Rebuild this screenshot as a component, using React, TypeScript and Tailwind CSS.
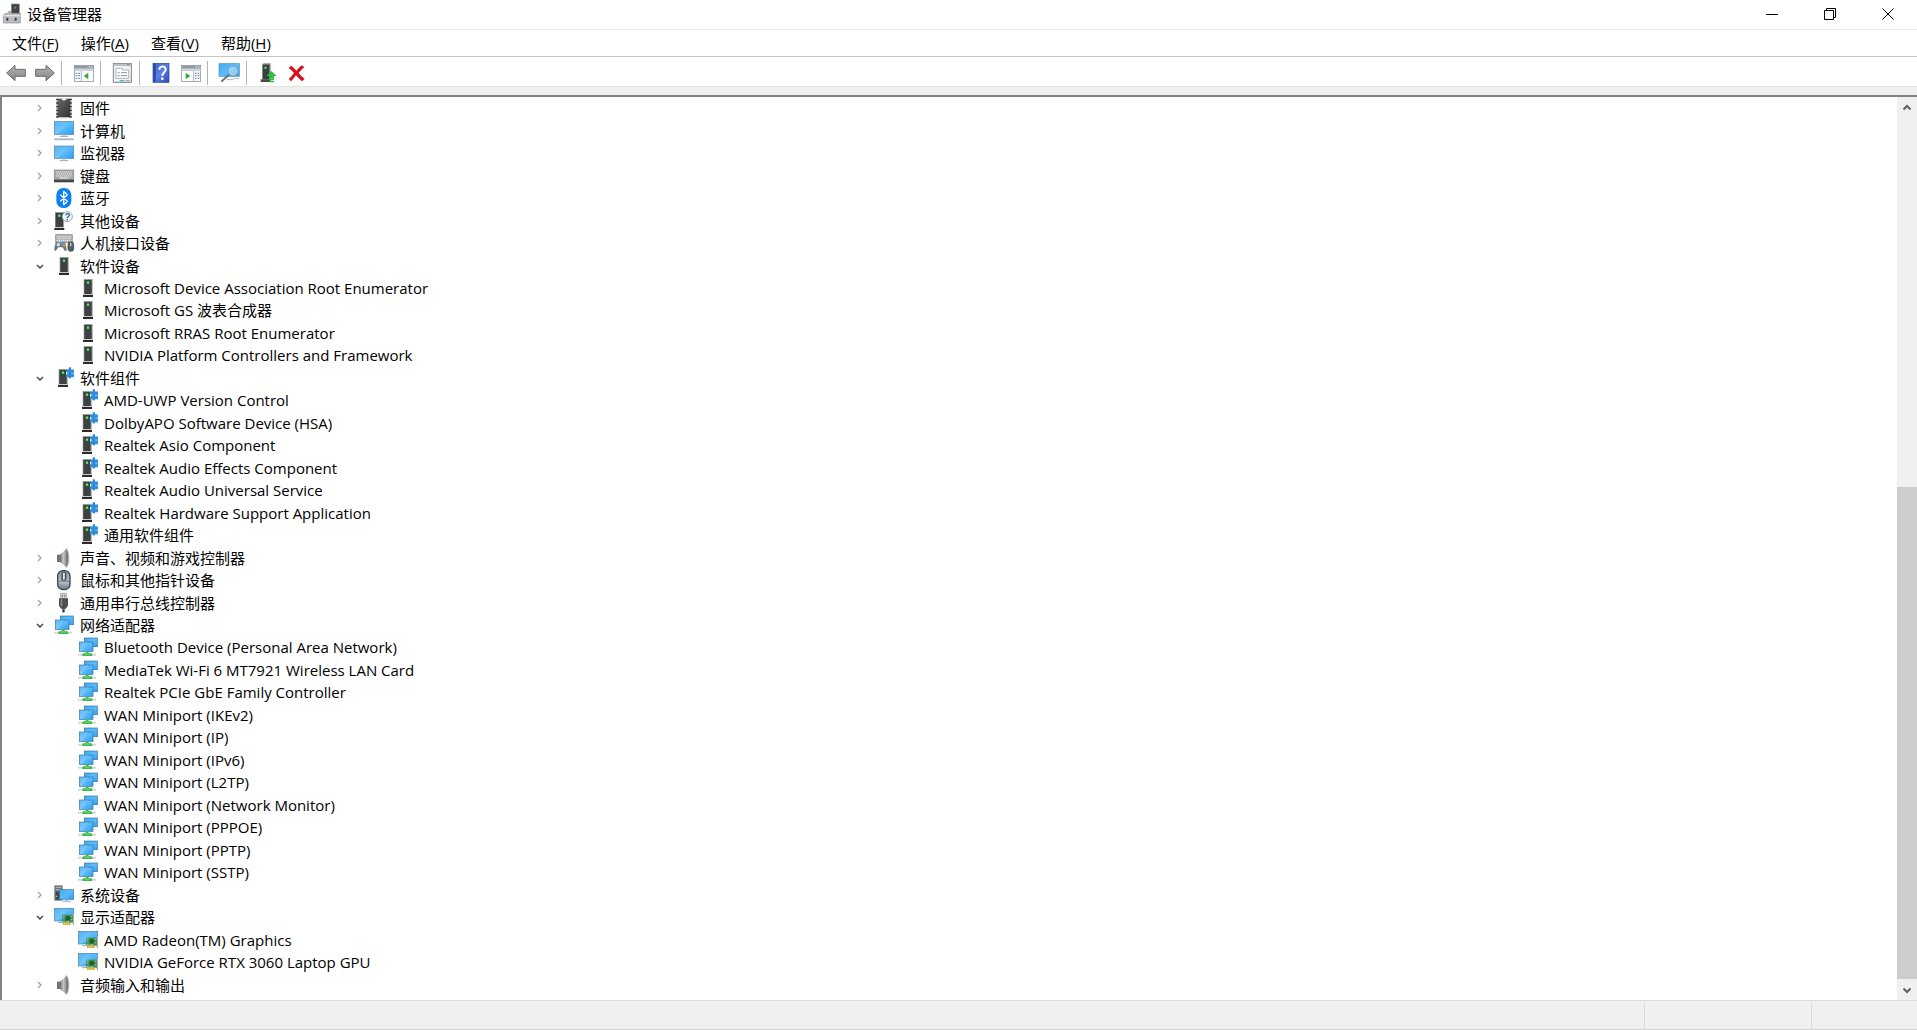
import { useState, type ReactNode } from "react";

type IconName =
  | "chip" | "computer" | "monitor" | "keyboard" | "bluetooth" | "unknown" | "hid"
  | "device" | "component" | "speaker" | "mouse" | "usb" | "network" | "system" | "display";

function Svg({ children }: { children: ReactNode }) {
  return (
    <svg viewBox="0 0 60 60" className="size-5 shrink-0 overflow-visible" aria-hidden="true">
      {children}
    </svg>
  );
}

function Defs() {
  return (
    <svg className="absolute size-0" aria-hidden="true">
      <defs>
        <linearGradient id="screen" x1="0" y1="0" x2="1" y2="1">
          <stop offset="0" stopColor="#3fa9f0" />
          <stop offset="0.5" stopColor="#5cbcfb" />
          <stop offset="1" stopColor="#2f9cf0" />
        </linearGradient>
        <linearGradient id="metal" x1="0" y1="0" x2="1" y2="0">
          <stop offset="0" stopColor="#6d7073" />
          <stop offset="0.5" stopColor="#c4c6c8" />
          <stop offset="1" stopColor="#77797c" />
        </linearGradient>
        <linearGradient id="arrow" x1="0" y1="0" x2="0" y2="1">
          <stop offset="0" stopColor="#b4b4b4" />
          <stop offset="1" stopColor="#858585" />
        </linearGradient>
        <linearGradient id="help" x1="0" y1="0" x2="1" y2="1">
          <stop offset="0" stopColor="#3f62cf" />
          <stop offset="0.5" stopColor="#5b7fe6" />
          <stop offset="1" stopColor="#2a49b0" />
        </linearGradient>
        <linearGradient id="chipBody" x1="0" y1="0" x2="1" y2="1">
          <stop offset="0" stopColor="#666" />
          <stop offset="1" stopColor="#333" />
        </linearGradient>
        <linearGradient id="mouseBody" x1="0" y1="0" x2="0" y2="1">
          <stop offset="0" stopColor="#8fa0ae" />
          <stop offset="0.6" stopColor="#b4bfc9" />
          <stop offset="1" stopColor="#667482" />
        </linearGradient>
      </defs>
    </svg>
  );
}

function Tower({ x = 0 }: { x?: number }) {
  return (
    <g transform={`translate(${x} 0)`}>
      <rect x="17" y="3" width="27" height="47" fill="#9b9d9d" />
      <rect x="19" y="6" width="22" height="42" fill="#3d4141" />
      <rect x="17" y="48" width="27" height="3" fill="#c9c9c9" />
      <rect x="15" y="51" width="30" height="6" fill="#2b2b2b" />
      <rect x="26" y="10" width="8" height="8" fill="#2c8f3a" />
      <rect x="27" y="11" width="6" height="6" fill="#5af060" />
    </g>
  );
}

function DeviceIcon({ name }: { name: IconName }) {
  switch (name) {
    case "chip":
      return (
        <Svg>
          <path d="M7 2h46v56H7z" fill="#a8a8a8" />
          <path d="M12 2h12c1 7 11 7 12 0h12v56H12z" fill="url(#chipBody)" />
          <path d="M7 4h6M7 15h6M7 26h6M7 37h6M7 48h6M7 57h6M47 4h6M47 15h6M47 26h6M47 37h6M47 48h6M47 57h6" stroke="#2a2a2a" strokeWidth="4" />
          <path d="M22 1c1 9 15 9 16 0z" fill="#e9e9e9" />
        </Svg>
      );
    case "computer":
      return (
        <Svg>
          <rect x="1" y="2" width="58" height="38" fill="url(#screen)" stroke="#4f7f9f" strokeWidth="2" />
          <path d="M2 3h40L14 39H2z" fill="#fff" opacity="0.13" />
          <path d="M26 41h8v5h-8z" fill="#a7d6f0" />
          <path d="M17 46h26" stroke="#9aa9b3" strokeWidth="3" />
          <path d="M1 55h58" stroke="#8eaec2" strokeWidth="5" />
          <path d="M3 54h54" stroke="#c3d5e0" strokeWidth="2" />
        </Svg>
      );
    case "monitor":
      return (
        <Svg>
          <rect x="1" y="9" width="58" height="37" fill="url(#screen)" stroke="#4f7f9f" strokeWidth="2" />
          <path d="M2 10h40L14 45H2z" fill="#fff" opacity="0.13" />
          <path d="M26 47h8v5h-8z" fill="#a7d6f0" />
          <path d="M17 53h26" stroke="#9aa9b3" strokeWidth="3" />
        </Svg>
      );
    case "keyboard":
      return (
        <Svg>
          <rect x="1" y="12" width="58" height="29" fill="#a3a6a9" stroke="#85888b" strokeWidth="2" />
          <path d="M5 18h50M8 24h46M5 30h50" stroke="#f0f0f0" strokeWidth="3" strokeDasharray="4 2" />
          <path d="M16 36h28" stroke="#f0f0f0" strokeWidth="3" />
          <rect x="0" y="41" width="60" height="8" fill="#45484b" />
        </Svg>
      );
    case "bluetooth":
      return (
        <Svg>
          <rect x="7" y="0" width="45" height="60" rx="21" fill="#0a82f5" />
          <path d="M19 20l21 20-11 10V10l11 10-21 20" fill="none" stroke="#fff" strokeWidth="4" strokeLinejoin="round" />
        </Svg>
      );
    case "unknown":
      return (
        <Svg>
          <Tower x={-14} />
          <circle cx="40" cy="17" r="15" fill="#f1f7fb" stroke="#9aa8b3" strokeWidth="3" />
          <path d="M35 13c0-7 11-7 11-1 0 4-6 5-6 10M40 25v4" fill="none" stroke="#2d64a4" strokeWidth="4" />
        </Svg>
      );
    case "hid":
      return (
        <Svg>
          <rect x="5" y="5" width="50" height="24" fill="#a9adb0" stroke="#85898c" strokeWidth="2" />
          <path d="M8 11h44M10 17h42M8 23h44" stroke="#f4f4f4" strokeWidth="3" strokeDasharray="4 2" />
          <path d="M1 52c0-14 3-25 9-25 4 0 5 4 9 4s6-4 10-4c6 0 8 10 9 22 0 7-6 7-9-1l-3-5H13l-4 6c-3 6-8 6-8 3z" fill="#6c7983" />
          <circle cx="13" cy="35" r="5" fill="#dfe6ea" />
          <circle cx="24" cy="31" r="5" fill="#3f9ee8" />
          <circle cx="31" cy="37" r="5" fill="#e0902f" />
          <rect x="42" y="26" width="17" height="29" rx="8" fill="#566069" stroke="#343c43" strokeWidth="2" />
          <path d="M50 29v11" stroke="#ccd4da" strokeWidth="4" />
        </Svg>
      );
    case "device":
      return (
        <Svg>
          <Tower />
        </Svg>
      );
    case "component":
      return (
        <Svg>
          <Tower x={-3} />
          <rect x="37" y="4" width="23" height="24" fill="#5fb0ea" />
          <path d="M44-2h7v33h-7z" fill="#2f86cc" />
          <path d="M36 6h24v7H36zM36 19h24v7H36z" fill="#2f8cd6" />
          <path d="M36 13h3v6h-3z" fill="#fff" />
        </Svg>
      );
    case "speaker":
      return (
        <Svg>
          <path d="M9 20h11v22H9z" fill="#6f7376" />
          <path d="M18 20L39 1v58L18 42z" fill="url(#metal)" />
          <path d="M37 2c10 8 10 48 0 56-4-10-4-46 0-56z" fill="#7c7f82" stroke="#adafb1" strokeWidth="2" />
        </Svg>
      );
    case "mouse":
      return (
        <Svg>
          <rect x="11" y="2" width="37" height="57" rx="16" fill="url(#mouseBody)" stroke="#39424a" strokeWidth="4" />
          <path d="M22 5v28M37 5v28M14 34h32" stroke="#5c6873" strokeWidth="2" />
          <rect x="25" y="6" width="9" height="25" rx="4" fill="#dfe7ed" stroke="#2d363d" strokeWidth="3" />
        </Svg>
      );
    case "usb":
      return (
        <Svg>
          <path d="M20 1h17v15H20z" fill="#d7d7d7" stroke="#8c8c8c" strokeWidth="2" />
          <path d="M24 6h3v5h-3zM31 6h3v5h-3z" fill="#666" />
          <path d="M15 16h27v20c0 7-7 9-9 13H24c-2-4-9-6-9-13z" fill="#4e4e4e" />
          <path d="M20 18h5v22h-5z" fill="#8a8a8a" />
          <path d="M25 49h7v9h-7z" fill="#333" />
        </Svg>
      );
    case "network":
      return (
        <Svg>
          <rect x="19" y="3" width="39" height="26" fill="url(#screen)" stroke="#33739e" strokeWidth="2" />
          <rect x="4" y="15" width="41" height="28" fill="url(#screen)" stroke="#33739e" strokeWidth="2" />
          <path d="M5 16h26L12 42H5z" fill="#fff" opacity="0.18" />
          <path d="M0 50h54v6H0z" fill="#d5d9d5" />
          <path d="M23 44h9v4h6l5 4v5H13v-5l5-4h5z" fill="#3fba4a" />
          <path d="M20 51h16" stroke="#7be07f" strokeWidth="3" />
        </Svg>
      );
    case "system":
      return (
        <Svg>
          <path d="M1 1h25v46H1z" fill="#6f7578" />
          <path d="M5 5h17v4H5zM5 12h17v4H5z" fill="#aab0b3" />
          <path d="M5 20h11v24H5z" fill="#40474b" />
          <rect x="6" y="32" width="4" height="4" fill="#6de06f" />
          <rect x="17" y="14" width="42" height="29" fill="url(#screen)" stroke="#3f7499" strokeWidth="2" />
          <path d="M34 44h9v4h-9z" fill="#8fc4e4" />
          <path d="M26 50h25" stroke="#a0b4c2" strokeWidth="3" />
        </Svg>
      );
    case "display":
      return (
        <Svg>
          <rect x="1" y="4" width="58" height="38" fill="url(#screen)" stroke="#4580a5" strokeWidth="2" />
          <path d="M2 5h40L14 41H2z" fill="#fff" opacity="0.13" />
          <path d="M12 47h14" stroke="#8fb0c6" strokeWidth="3" />
          <path d="M56 20h4v35h-4z" fill="#aeb5b0" />
          <rect x="25" y="23" width="32" height="24" fill="#3d8f52" />
          <rect x="35" y="28" width="13" height="12" fill="#245a38" />
          <path d="M27 27h5M27 33h4M50 28h5M50 38h5M27 43h5M37 44h8" stroke="#a3d09d" strokeWidth="3" />
          <path d="M27 47h23v7H27z" fill="#e2a52c" />
          <path d="M31 47v7M37 47v7M43 47v7" stroke="#f9dc79" strokeWidth="2" />
        </Svg>
      );
  }
}

type Row = { label: string; icon: IconName; level: 1 | 2; open?: boolean };

const group = (label: string, icon: IconName, children: string[] = []): Row[] => [
  { label, icon, level: 1, open: children.length > 0 },
  ...children.map((child): Row => ({ label: child, icon, level: 2 })),
];

const rows: Row[] = [
  ...group("固件", "chip"),
  ...group("计算机", "computer"),
  ...group("监视器", "monitor"),
  ...group("键盘", "keyboard"),
  ...group("蓝牙", "bluetooth"),
  ...group("其他设备", "unknown"),
  ...group("人机接口设备", "hid"),
  ...group("软件设备", "device", [
    "Microsoft Device Association Root Enumerator",
    "Microsoft GS 波表合成器",
    "Microsoft RRAS Root Enumerator",
    "NVIDIA Platform Controllers and Framework",
  ]),
  ...group("软件组件", "component", [
    "AMD-UWP Version Control",
    "DolbyAPO Software Device (HSA)",
    "Realtek Asio Component",
    "Realtek Audio Effects Component",
    "Realtek Audio Universal Service",
    "Realtek Hardware Support Application",
    "通用软件组件",
  ]),
  ...group("声音、视频和游戏控制器", "speaker"),
  ...group("鼠标和其他指针设备", "mouse"),
  ...group("通用串行总线控制器", "usb"),
  ...group("网络适配器", "network", [
    "Bluetooth Device (Personal Area Network)",
    "MediaTek Wi-Fi 6 MT7921 Wireless LAN Card",
    "Realtek PCIe GbE Family Controller",
    "WAN Miniport (IKEv2)",
    "WAN Miniport (IP)",
    "WAN Miniport (IPv6)",
    "WAN Miniport (L2TP)",
    "WAN Miniport (Network Monitor)",
    "WAN Miniport (PPPOE)",
    "WAN Miniport (PPTP)",
    "WAN Miniport (SSTP)",
  ]),
  ...group("系统设备", "system"),
  ...group("显示适配器", "display", ["AMD Radeon(TM) Graphics", "NVIDIA GeForce RTX 3060 Laptop GPU"]),
  ...group("音频输入和输出", "speaker"),
];

function TreeRow({ row, selected, onSelect }: { row: Row; selected: boolean; onSelect: () => void }) {
  return (
    <li
      role="treeitem"
      aria-level={row.level}
      aria-selected={selected}
      aria-expanded={row.level === 1 ? row.open : undefined}
      className={`flex min-h-0 flex-1 items-center ${row.level === 1 ? "pl-8" : "pl-[76px]"}`}
    >
      {row.level === 1 && (
        <button type="button" aria-label={row.open ? "折叠" : "展开"} className="mr-2 flex size-3 items-center justify-center">
          <svg viewBox="0 0 12 12" className="size-3" fill="none" aria-hidden="true">
            {row.open ? (
              <path d="M3 5l3 3 3-3" stroke="#404040" strokeWidth="1.4" />
            ) : (
              <path d="M4 3l3 3-3 3" stroke="#a6a6a6" strokeWidth="1.4" />
            )}
          </svg>
        </button>
      )}
      <button type="button" onClick={onSelect} className="flex items-center gap-1.5 whitespace-nowrap leading-5">
        <DeviceIcon name={row.icon} />
        <span>{row.label}</span>
      </button>
    </li>
  );
}

function Arrow({ flip = false }: { flip?: boolean }) {
  return (
    <Svg>
      <path
        d="M2 30L27 7v12h31v21H27v13z"
        transform={flip ? "translate(60 0) scale(-1 1)" : undefined}
        fill="url(#arrow)"
        stroke="#6b6b6b"
        strokeWidth="3"
        strokeLinejoin="round"
      />
    </Svg>
  );
}

function PaneIcon({ right = false }: { right?: boolean }) {
  return (
    <Svg>
      <rect x="1" y="7" width="58" height="48" fill="#fbfbfb" stroke="#7f8690" strokeWidth="2" />
      <path d="M2 8h56v9H2z" fill="#8f98a4" />
      <path d="M44 12h4M51 12h4" stroke="#fff" strokeWidth="3" />
      <path d="M2 18h56v6H2z" fill="#cdd2d8" />
      {right ? (
        <>
          <path d="M38 24v30" stroke="#8b929b" strokeWidth="2" />
          <path d="M42 31h5M50 31h5M42 38h5M50 38h5M42 46h5M50 46h5" stroke="#5f7fae" strokeWidth="3" />
          <path d="M14 29l14 10-14 10z" fill="#3aa53b" />
        </>
      ) : (
        <>
          <path d="M22 24v30" stroke="#8b929b" strokeWidth="2" />
          <path d="M5 31h5M13 31h5M5 38h5M13 38h5M5 46h5M13 46h5" stroke="#5f7fae" strokeWidth="3" />
          <path d="M43 29v20l-14-10z" fill="#3aa53b" />
        </>
      )}
    </Svg>
  );
}

function PropertiesIcon() {
  return (
    <Svg>
      <rect x="1" y="2" width="54" height="56" fill="#f0f1f2" stroke="#7f8489" strokeWidth="3" />
      <path d="M2 3h52v6H2z" fill="#bcc1c6" />
      <path d="M42 6h8" stroke="#747a80" strokeWidth="3" />
      <path d="M9 16h19v5h19v25H9z" fill="#fff" stroke="#8b959f" strokeWidth="2" />
      <path d="M14 29h6M24 29h18M14 38h6M24 38h18" stroke="#8693a0" strokeWidth="3" />
      <path d="M20 53h14" stroke="#47b9dc" strokeWidth="4" />
      <path d="M38 53h12" stroke="#a8adb2" strokeWidth="4" />
    </Svg>
  );
}

function HelpIcon() {
  return (
    <Svg>
      <rect x="3" y="1" width="48" height="57" fill="url(#help)" stroke="#2c449b" strokeWidth="2" />
      <path d="M4 2h7v55H4z" fill="#2a469f" />
      <path d="M22 20c0-13 20-12 19 0-1 8-10 8-10 19" fill="none" stroke="#fff" strokeWidth="6" />
      <circle cx="31" cy="47" r="4" fill="#fff" />
    </Svg>
  );
}

function ScanIcon() {
  return (
    <Svg>
      <rect x="-3" y="2" width="61" height="38" fill="url(#screen)" stroke="#4f8db5" strokeWidth="2" />
      <path d="M20 50h20" stroke="#a5b6c1" strokeWidth="3" />
      <path d="M29 34L6 54" stroke="#6c7681" strokeWidth="6" strokeLinecap="round" />
      <circle cx="39" cy="24" r="15" fill="#a9d9f8" fillOpacity="0.75" stroke="#7fa5bd" strokeWidth="3" />
      <path d="M40 47h18" stroke="#b5c3cc" strokeWidth="3" />
    </Svg>
  );
}

function UpdateIcon() {
  return (
    <Svg>
      <path d="M10 3l5-2h20v49H10z" fill="#8f9292" />
      <rect x="11" y="5" width="20" height="44" fill="#393d3d" />
      <rect x="5" y="49" width="30" height="8" fill="#474949" />
      <rect x="16" y="11" width="7" height="7" fill="#48db52" />
      <path d="M37 24l16 15h-8v8H30v-8h-8z" fill="#2fbd3d" />
      <path d="M30 50h15M30 56h15" stroke="#2fbd3d" strokeWidth="4" />
    </Svg>
  );
}

function RemoveIcon() {
  return (
    <Svg>
      <path d="M9 8c6 3 11 9 16 15 6-7 12-12 17-16l7 6c-7 5-12 11-17 17 6 7 11 13 18 17l-8 8c-6-5-12-11-18-18-5 7-10 13-15 18l-7-7c6-5 11-11 16-18C13 24 8 19 2 15z" fill="#d8121c" />
    </Svg>
  );
}

const toolbar: { label: string; icon: ReactNode }[][] = [
  [
    { label: "后退", icon: <Arrow /> },
    { label: "前进", icon: <Arrow flip /> },
  ],
  [{ label: "显示/隐藏控制台树", icon: <PaneIcon /> }],
  [{ label: "属性", icon: <PropertiesIcon /> }],
  [
    { label: "帮助", icon: <HelpIcon /> },
    { label: "显示/隐藏操作窗格", icon: <PaneIcon right /> },
  ],
  [{ label: "扫描检测硬件改动", icon: <ScanIcon /> }],
  [
    { label: "更新驱动程序", icon: <UpdateIcon /> },
    { label: "卸载设备", icon: <RemoveIcon /> },
  ],
];

const menus = [
  ["文件", "F"],
  ["操作", "A"],
  ["查看", "V"],
  ["帮助", "H"],
];

function AppIcon() {
  return (
    <Svg>
      <rect x="28" y="0" width="24" height="32" fill="#3f4343" stroke="#8d8f8f" strokeWidth="2" />
      <rect x="37" y="8" width="6" height="6" fill="#4fae5a" />
      <path d="M10 28h10v-6h7v6h28v29H4V34z" fill="#bcbebf" stroke="#8c8e8f" strokeWidth="2" />
      <path d="M5 35h50" stroke="#e1e2e3" strokeWidth="4" />
      <path d="M13 41h6v9h-6zM38 41h6v9h-6z" fill="#3c3e3f" />
    </Svg>
  );
}

const windowButtons = [
  { label: "最小化", d: "M0 6.5h12" },
  { label: "向下还原", d: "M.5 2.5h9v9h-9zM2.500 2.500v-2h9v9h-2" },
  { label: "关闭", d: "M.5.5l11 11M11.500.5l-11 11" },
];

export default function App() {
  const [selected, setSelected] = useState(-1);
  return (
    <div className="flex h-screen flex-col bg-white font-['Open_Sans','Noto_Sans_CJK_SC',sans-serif] text-[15px] text-black">
      <Defs />
      <header className="flex h-[29px] shrink-0 items-center justify-between pb-px pl-0.5">
        <div className="flex items-center gap-[5px]">
          <AppIcon />
          <h1 className="leading-5">设备管理器</h1>
        </div>
        <div className="flex h-full">
          {windowButtons.map((b) => (
            <button key={b.label} type="button" aria-label={b.label} className="flex w-[58px] items-center justify-center">
              <svg viewBox="0 0 12 12" className="size-3" fill="none" stroke="#000" strokeWidth="1" aria-hidden="true">
                <path d={b.d} />
              </svg>
            </button>
          ))}
        </div>
      </header>

      <nav aria-label="菜单栏" className="flex h-7 shrink-0 items-center border-y border-t-[#e8e8e8] border-b-[#c6c6c6] pb-px pl-px">
        {menus.map(([name, key]) => (
          <button key={key} type="button" className="px-[11px] leading-5">
            {name}(<span className="underline underline-offset-2">{key}</span>)
          </button>
        ))}
      </nav>

      <div role="toolbar" aria-label="工具栏" className="flex h-[30px] shrink-0 items-center border-b border-[#e2e2e2] pt-0.5">
        {toolbar.map((items, i) => (
          <div key={i} className="flex h-6 items-center gap-[9px] border-r border-[#b4b4b4] pr-1.5 pl-3 first:pl-1.5 last:border-r-0">
            {items.map((item) => (
              <button key={item.label} type="button" aria-label={item.label}>
                {item.icon}
              </button>
            ))}
          </div>
        ))}
      </div>

      <div className="h-2 shrink-0 bg-[#f0f0f0]" />

      <main className="flex min-h-0 flex-1 border-t-2 border-l-2 border-[#828282]">
        <ul role="tree" aria-label="设备" className="flex min-w-0 flex-1 flex-col pb-1">
          {rows.map((row, i) => (
            <TreeRow key={i} row={row} selected={selected === i} onSelect={() => setSelected(i)} />
          ))}
        </ul>
        <div className="flex w-5 shrink-0 flex-col bg-[#f0f0f0]">
          <button type="button" aria-label="向上滚动" className="flex h-[21px] items-center justify-center">
            <svg viewBox="0 0 10 10" className="size-2.5" fill="none" aria-hidden="true">
              <path d="M1.500 6.500L5 3l3.500 3.500" stroke="#606060" strokeWidth="2" />
            </svg>
          </button>
          <div className="grow-3" />
          <div className="grow-4 bg-[#cdcdcd]" />
          <button type="button" aria-label="向下滚动" className="flex h-[21px] items-center justify-center">
            <svg viewBox="0 0 10 10" className="size-2.5" fill="none" aria-hidden="true">
              <path d="M1.500 3.500L5 7l3.500-3.500" stroke="#606060" strokeWidth="2" />
            </svg>
          </button>
        </div>
      </main>

      <footer className="flex h-[30px] shrink-0 border-y border-t-[#dcdcdc] border-b-[#d4d4d4] bg-[#f0f0f0] pt-0.5">
        <div className="flex-1" />
        <div className="w-[167px] border-l border-[#dadada]" />
        <div className="w-[106px] border-l border-[#dadada]" />
      </footer>
    </div>
  );
}
